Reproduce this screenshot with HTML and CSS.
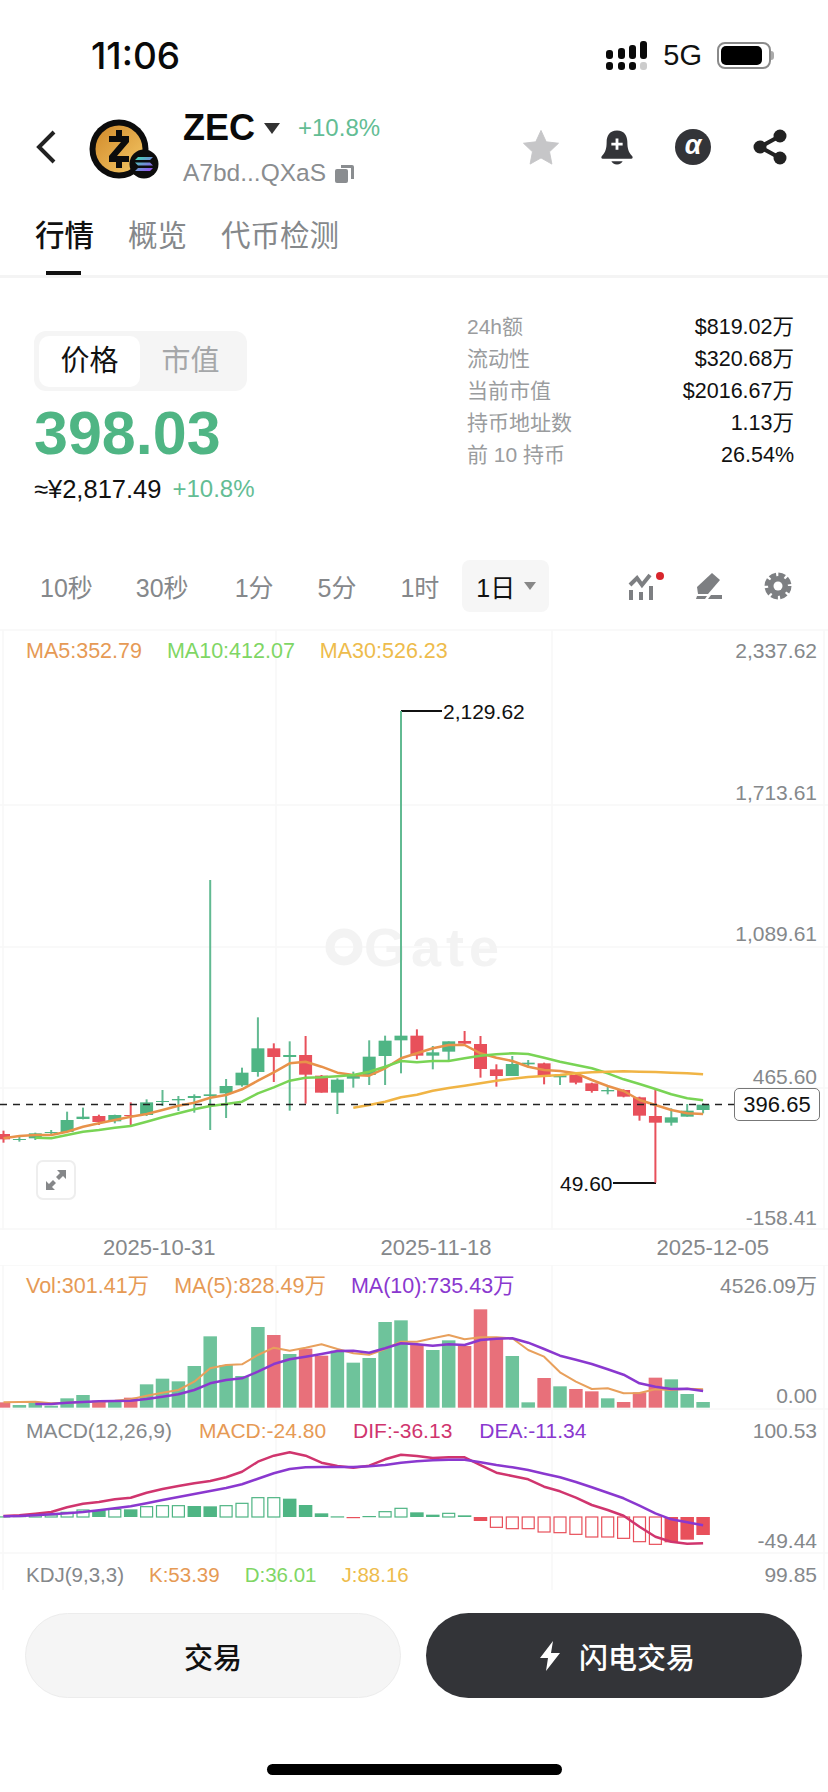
FILE: index.html
```html
<!doctype html>
<html>
<head>
<meta charset="UTF-8">
<title>ZEC</title>
<link rel="stylesheet" href="styles.css">
</head>

<body>
<div class="page">

  <div class="status">
    <span class="time">11:06</span>
    <div class="status-right">
      <svg class="signal" width="41" height="29" viewBox="0 0 41 29">
        <rect x="0" y="9" width="7" height="9" rx="3"/><rect x="0" y="21" width="7" height="8" rx="3"/>
        <rect x="12" y="7" width="7" height="11" rx="3"/><rect x="12" y="21" width="7" height="8" rx="3"/>
        <rect x="23" y="4" width="7" height="14" rx="3"/><rect x="23" y="21" width="7" height="8" rx="3"/>
        <rect x="34" y="0" width="7" height="18" rx="3"/><rect class="off" x="34" y="21" width="7" height="8" rx="3"/>
      </svg>
      <span class="net">5G</span>
      <div class="battery"><i></i></div>
    </div>
  </div>

  <div class="header">
    <svg class="back" width="20" height="34" viewBox="0 0 20 34"><path d="M18 2 3 17l15 15" fill="none" stroke="#222" stroke-width="4"/></svg>
    <svg class="logo" width="70" height="60" viewBox="0 0 70 60">
      <defs>
        <linearGradient id="gold" x1="0" y1="0" x2="1" y2="1"><stop offset="0" stop-color="#d18a2a"/><stop offset="1" stop-color="#f4c765"/></linearGradient>
        <linearGradient id="sol" x1="0" y1="0" x2="1" y2="1"><stop offset="0" stop-color="#3fe0b0"/><stop offset="1" stop-color="#9b45f5"/></linearGradient>
      </defs>
      <circle cx="30" cy="30" r="29.5" fill="#0c0c0c"/>
      <circle cx="30" cy="30" r="23.5" fill="url(#gold)"/>
      <path d="M30 11v7M30 42v7" stroke="#0c0c0c" stroke-width="6"/>
      <path d="M20 17h20v6L28 37h12v6H20v-6l12-14H20z" fill="#0c0c0c"/>
      <circle cx="55" cy="45" r="14.5" fill="#0c0c0c"/>
      <path d="M49 38h15l-3 3H46zM46 43.500h15l3 3H49zM49 49h15l-3 3H46z" fill="url(#sol)"/>
    </svg>
    <div class="coin">
      <div class="coin-top">
        <span class="coin-name">ZEC</span>
        <i class="caret"></i>
        <span class="coin-pct">+10.8%</span>
      </div>
      <div class="coin-addr">
        A7bd...QXaS
        <svg width="19" height="19" viewBox="0 0 19 19"><path d="M6 1h11q2 0 2 2v12h-3V4H6z" fill="#8a8d90"/><rect x="0" y="5" width="13" height="14" rx="2" fill="#8a8d90"/></svg>
      </div>
    </div>
    <div class="actions">
      <svg width="36" height="35" viewBox="0 0 38 36"><path d="M19 0 24.500 12 37.500 13.500 28 22.500 30.500 35.500 19 29 7.500 35.500 10 22.500 .5 13.500 13.500 12z" fill="#c6c6c8" stroke="#c6c6c8" stroke-linejoin="round"/></svg>
      <svg width="32" height="35" viewBox="0 0 34 36"><path d="M17 0c-8 0-11 6-11 12 0 7-1 11-5 15-1 1-1 3 1 3h30c2 0 2-2 1-3-4-4-5-8-5-15 0-6-3-12-11-12z" fill="#333438"/><path d="M11 32.500h12c-1 2-3 3.500-6 3.500s-5-1.500-6-3.500z" fill="#333438"/><path d="M17 8.500v12M11 14.500h12" stroke="#fff" stroke-width="3"/></svg>
      <div class="alpha">α</div>
      <svg width="34" height="36" viewBox="0 0 34 36"><path d="M27 7 7 18l20 11" fill="none" stroke="#222" stroke-width="4"/><circle cx="27" cy="7" r="6.500" fill="#222"/><circle cx="7" cy="18" r="6.500" fill="#222"/><circle cx="27" cy="29" r="6.500" fill="#222"/></svg>
    </div>
  </div>

  <div class="tabs">
    <a class="tab tab-on">行情</a>
    <a class="tab">概览</a>
    <a class="tab">代币检测</a>
  </div>

  <div class="summary">
    <div class="price-box">
      <div class="toggle">
        <span class="toggle-on">价格</span>
        <span>市值</span>
      </div>
      <div class="price">398.03</div>
      <div class="price-sub"><span>≈¥2,817.49</span><span class="pct">+10.8%</span></div>
    </div>
    <ul class="stats">
      <li><span>24h额</span><b>$819.02万</b></li>
      <li><span>流动性</span><b>$320.68万</b></li>
      <li><span>当前市值</span><b>$2016.67万</b></li>
      <li><span>持币地址数</span><b>1.13万</b></li>
      <li><span>前 10 持币</span><b>26.54%</b></li>
    </ul>
  </div>

  <div class="periods">
    <a class="p1">10秒</a>
    <a class="p2">30秒</a>
    <a class="p3">1分</a>
    <a class="p4">5分</a>
    <a class="p5">1时</a>
    <a class="period-on">1日<i></i></a>
    <div class="tools">
      <svg width="38" height="28" viewBox="0 0 38 28"><path d="M2 13 9 6l5 7 8-10" fill="none" stroke="#7d7f82" stroke-width="4"/><path d="M3 18v10M13 20v8M23 14v14" stroke="#7d7f82" stroke-width="4"/><circle cx="32" cy="4" r="4" fill="#d8262c"/></svg>
      <svg width="26" height="26" viewBox="0 0 26 26"><path d="M16 0l8 7-12 14H2l-1-7z" fill="#7d7f82"/><path d="M12 26h14v-4H15zM0 26h9l2-3H1z" fill="#7d7f82"/></svg>
      <svg width="28" height="28" viewBox="0 0 28 28"><circle cx="14" cy="14" r="10" fill="#7d7f82"/><circle cx="14" cy="14" r="11" fill="none" stroke="#7d7f82" stroke-width="5" stroke-dasharray="6.500 2.140"/><circle cx="14" cy="14" r="4.500" fill="#fff"/></svg>
    </div>
  </div>

  <div class="pane pane-main">
    <svg id="main" class="plot" viewBox="0 626 828 604">
      <g class="grid">
        <path d="M0 805H828M0 947H828M0 1088H828M0 1229H828M3 630V1230M276 630V1230M552 630V1230M824 630V1230M0 630H828"/>
      </g>
      <g class="mark">
        <circle cx="344" cy="947" r="14" fill="none" stroke="#f3f3f3" stroke-width="9"/>
        <text x="364" y="966">Gate</text>
      </g>
      <text class="tick" x="817" y="800">1,713.61</text>
      <text class="tick" x="817" y="941">1,089.61</text>
      <text class="tick" x="817" y="1084">465.60</text>
      <text class="tick" x="817" y="1225">-158.41</text>
      <path class="lead" d="M401 711H442M613 1183H656"/>
      <text class="note" x="443" y="719">2,129.62</text>
      <text class="note" x="560" y="1191">49.60</text>
    </svg>
    <div class="legend legend-main">
      <span class="c-ma5">MA5:352.79</span>
      <span class="c-ma10">MA10:412.07</span>
      <span class="c-ma30">MA30:526.23</span>
      <span class="axis-top">2,337.62</span>
    </div>
    <div class="last-price">396.65</div>
    <div class="expand">
      <svg width="20" height="20" viewBox="0 0 20 20"><path d="M11 0h9v9l-3-3-4 4-3-3 4-4zM9 20H0v-9l3 3 4-4 3 3-4 4z" fill="#858789"/></svg>
    </div>
  </div>

  <div class="dates">
    <span>2025-10-31</span>
    <span>2025-11-18</span>
    <span>2025-12-05</span>
  </div>

  <div class="pane pane-vol">
    <svg id="vol" class="plot" viewBox="0 1265 828 145">
      <g class="grid"><path d="M0 1265H828M0 1409H828M3 1265V1410M276 1265V1410M552 1265V1410M824 1265V1410"/></g>
      <text class="tick" x="817" y="1403">0.00</text>
    </svg>
    <div class="legend legend-vol">
      <span class="c-ma5">Vol:301.41万</span>
      <span class="c-ma5">MA(5):828.49万</span>
      <span class="c-purple">MA(10):735.43万</span>
      <span class="axis-top">4526.09万</span>
    </div>
  </div>

  <div class="pane pane-macd">
    <svg id="macd" class="plot" viewBox="0 1410 828 144">
      <g class="grid"><path d="M0 1553H828M3 1410V1554M276 1410V1554M552 1410V1554M824 1410V1554"/></g>
      <text class="tick" x="817" y="1548">-49.44</text>
    </svg>
    <div class="legend">
      <span class="c-gray">MACD(12,26,9)</span>
      <span class="c-ma5">MACD:-24.80</span>
      <span class="c-dif">DIF:-36.13</span>
      <span class="c-purple">DEA:-11.34</span>
      <span class="axis-top">100.53</span>
    </div>
  </div>

  <div class="pane pane-kdj">
    <svg class="plot" viewBox="0 1554 828 36">
      <g class="grid"><path d="M3 1554V1590M276 1554V1590M552 1554V1590M824 1554V1590"/></g>
    </svg>
    <div class="legend legend-kdj">
      <span class="c-gray">KDJ(9,3,3)</span>
      <span class="c-ma5">K:53.39</span>
      <span class="c-ma10">D:36.01</span>
      <span class="c-ma30">J:88.16</span>
      <span class="axis-top">99.85</span>
    </div>
  </div>

  <div class="footer">
    <a class="btn btn-light">交易</a>
    <a class="btn btn-dark">
      <svg width="20" height="30" viewBox="0 0 20 30"><path d="M13 0 0 17h8L6 30 20 12h-9z" fill="#fff"/></svg>
      闪电交易
    </a>
  </div>
  <div class="home"></div>

</div>
<script src="chart.js"></script>
</body>
</html>
```

FILE: styles.css
```css
* {
  box-sizing: border-box;
}
html, body {
  margin: 0;
  padding: 0;
  background-color: #fff;
}
body {
  font-family: "Liberation Sans", "Noto Sans CJK SC", sans-serif;
  color: #111;
}
ul {
  list-style: none;
  margin: 0;
  padding: 0;
}
.page {
  width: 828px;
  height: 1792px;
  overflow: hidden;
}

/* status bar */
.status {
  height: 110px;
  display: flex;
  align-items: center;
  justify-content: space-between;
  padding: 0 57px 0 91px;
}
.time {
  font-family: Inter, sans-serif;
  font-size: 37px;
  font-weight: 500;
  color: #0a0a0a;
}
.status-right {
  display: flex;
  align-items: center;
}
.signal {
  margin-right: 1px;
}
.signal rect {
  fill: #0a0a0a;
}
.signal .off {
  fill: #ccc;
}
.net {
  font-size: 29px;
  margin: 0 15px;
  color: #111;
}
.battery {
  width: 54px;
  height: 27px;
  border: 2px solid #8a8a8a;
  border-radius: 8px;
  padding: 2px;
  position: relative;
}
.battery i {
  display: block;
  width: 41px;
  height: 19px;
  background-color: #000;
  border-radius: 5px;
}
.battery:after {
  content: '';
  position: absolute;
  right: -5px;
  top: 7px;
  width: 3px;
  height: 9px;
  border-radius: 0 3px 3px 0;
  background-color: #aaa;
}

/* coin header */
.header {
  height: 74px;
  display: flex;
  align-items: center;
  padding: 0 41px 0 36px;
}
.back {
  flex: none;
}
.logo {
  flex: none;
  margin: 4px 24px 0 33px;
}
.coin {
  flex: none;
  margin-top: 4px;
}
.coin-top {
  display: flex;
  align-items: center;
  height: 36px;
}
.coin-name {
  font-size: 36px;
  font-weight: 700;
  color: #0a0a0a;
}
.caret {
  width: 0;
  height: 0;
  margin: 0 18px 0 9px;
  border: 8.5px solid transparent;
  border-bottom: none;
  border-top: 11px solid #333;
}
.coin-pct {
  font-size: 24px;
  color: #63bd94;
}
.coin-addr {
  display: flex;
  align-items: center;
  gap: 9px;
  font-size: 24.5px;
  line-height: 30px;
  margin-top: 12px;
  color: #8a8d90;
}
.actions {
  margin-left: auto;
  display: flex;
  align-items: center;
  gap: 42px;
}
.alpha {
  width: 36px;
  height: 36px;
  border-radius: 50%;
  background-color: #333438;
  color: #fff;
  font-size: 27px;
  font-style: italic;
  font-weight: 700;
  line-height: 33px;
  text-align: center;
}

/* tabs */
.tabs {
  height: 94px;
  display: flex;
  align-items: flex-start;
  gap: 34px;
  padding: 30px 0 0 35px;
  border-bottom: 3px solid #f4f4f4;
}
.tab {
  position: relative;
  height: 61px;
  font-size: 29.5px;
  line-height: 44px;
  color: #85888b;
}
.tab-on {
  color: #111;
  font-weight: 500;
}
.tab-on:after {
  content: '';
  position: absolute;
  left: 11px;
  bottom: 0;
  width: 35px;
  height: 4px;
  background-color: #111;
}

/* price summary */
.summary {
  height: 282px;
  display: flex;
  justify-content: space-between;
  padding: 33px 34px 0 34px;
}
.price-box {
  padding-top: 20px;
}
.toggle {
  width: 213px;
  height: 60px;
  display: flex;
  align-items: center;
  padding: 0 5px;
  background-color: #f5f5f5;
  border-radius: 12px;
}
.toggle span {
  width: 101px;
  height: 51px;
  font-size: 29px;
  line-height: 50px;
  text-align: center;
  color: #a5a7a9;
}
.toggle .toggle-on {
  background-color: #fff;
  border-radius: 10px;
  color: #111;
}
.price {
  font-size: 61px;
  font-weight: 700;
  line-height: 66px;
  margin-top: 9px;
  color: #4fb584;
}
.price-sub {
  display: flex;
  align-items: center;
  gap: 11px;
  margin-top: 9px;
  font-size: 25.5px;
  line-height: 28px;
}
.pct {
  font-size: 24px;
  color: #63bd94;
}
.stats {
  width: 327px;
}
.stats li {
  display: flex;
  justify-content: space-between;
  height: 32px;
  font-size: 21px;
  line-height: 32px;
  color: #9a9c9e;
}
.stats b {
  font-size: 21.5px;
  font-weight: 400;
  color: #111;
}

/* period row */
.periods {
  height: 52px;
  position: relative;
  display: flex;
  align-items: center;
  font-size: 25px;
  color: #85888b;
}
.p1 { margin-left: 40px; }
.p2 { margin-left: 43px; }
.p3 { margin-left: 46px; }
.p4 { margin-left: 44px; }
.p5 { margin-left: 44px; }
.period-on {
  margin-left: 23px;
  width: 87px;
  height: 52px;
  padding-left: 14px;
  display: flex;
  align-items: center;
  background-color: #f6f6f6;
  border-radius: 8px;
  color: #111;
}
.period-on i {
  width: 0;
  height: 0;
  margin-left: 9px;
  border: 6px solid transparent;
  border-bottom: none;
  border-top: 8px solid #888;
}
.tools {
  margin-left: auto;
  margin-right: 36px;
  display: flex;
  align-items: center;
  gap: 30px;
}
.tools svg:last-child {
  margin-left: 12px;
}

/* chart panes */
.pane {
  position: relative;
}
.pane-main {
  height: 604px;
  margin-top: 14px;
}
.pane-vol {
  height: 145px;
}
.pane-macd {
  height: 144px;
}
.pane-kdj {
  height: 36px;
}
.plot {
  display: block;
  width: 828px;
  height: 100%;
}
.grid path {
  fill: none;
  stroke: #f8f8f8;
  stroke-width: 1.500;
}
.mark text {
  font-size: 54px;
  font-weight: 700;
  letter-spacing: 5px;
  fill: #f3f3f3;
}
.tick {
  font-size: 21px;
  fill: #85888b;
  text-anchor: end;
}
.note {
  font-size: 21px;
  fill: #111;
}
.lead {
  fill: none;
  stroke: #111;
  stroke-width: 2;
}
.legend {
  position: absolute;
  left: 26px;
  right: 11px;
  top: 9px;
  display: flex;
  gap: 27px;
  font-size: 21px;
  line-height: 24px;
}
.legend-main {
  top: 13px;
  gap: 25px;
  font-size: 21.5px;
}
.legend-vol {
  gap: 25px;
  font-size: 21.5px;
}
.legend-kdj {
  font-size: 20.5px;
  gap: 25px;
}
.axis-top {
  margin-left: auto;
  font-size: 21px;
  color: #85888b;
}
.c-ma5 { color: #e69a55; }
.c-ma10 { color: #7fd665; }
.c-ma30 { color: #eebc4c; }
.c-purple { color: #8a38cf; }
.c-dif { color: #d0356e; }
.c-gray { color: #85888b; }
.last-price {
  position: absolute;
  left: 734px;
  top: 462px;
  width: 86px;
  height: 33px;
  border: 1px solid #777;
  border-radius: 5px;
  background-color: #fff;
  font-size: 22px;
  line-height: 31px;
  text-align: center;
  color: #111;
}
.expand {
  position: absolute;
  left: 36px;
  top: 534px;
  width: 40px;
  height: 40px;
  display: flex;
  align-items: center;
  justify-content: center;
  background-color: #fff;
  border: 2px solid #eee;
  border-radius: 7px;
}
.dates {
  height: 35px;
  display: flex;
  justify-content: space-between;
  align-items: center;
  padding: 0 59px 0 103px;
  font-size: 22px;
  color: #85888b;
}

/* bottom buttons */
.footer {
  display: flex;
  justify-content: space-between;
  padding: 23px 26px 0 25px;
}
.btn {
  width: 376px;
  height: 85px;
  display: flex;
  align-items: center;
  justify-content: center;
  gap: 19px;
  border-radius: 43px;
  font-size: 29px;
  font-weight: 500;
}
.btn-light {
  background-color: #f5f5f5;
  border: 1px solid #ececec;
  color: #111;
}
.btn-dark {
  padding-left: 7px;
  background-color: #333438;
  color: #fff;
}
.home {
  width: 295px;
  height: 11px;
  margin: 66px auto 0;
  background-color: #000;
  border-radius: 6px;
}
```

FILE: chart.js
```js
// y values are in thirds of a pixel above each pane's own offset, one per candle
var NS = 'http://www.w3.org/2000/svg';
var UP = '#4fb584', DOWN = '#e8505b';
var STEP = 15.9, FIRST = 3.5;

function cx(i) { return FIRST + STEP * i; }

function el(parent, name, attrs) {
  var n = document.createElementNS(NS, name);
  for (var k in attrs) n.setAttribute(k, attrs[k]);
  parent.appendChild(n);
  return n;
}

function line(svg, base, from, ys, color, w) {
  var pts = ys.map(function (v, i) {
    return cx(from + i).toFixed(1) + ',' + (base + v / 3).toFixed(1);
  });
  el(svg, 'polyline', { points: pts.join(' '), fill: 'none', stroke: color, 'stroke-width': w, 'stroke-linejoin': 'round' });
}

// up?, wick top, wick bottom, body top, body bottom
var candles = [
  [0,512,548,522,538],[1,530,545,537,540],[1,518,540,520,535],[1,510,527,516,519],[1,455,516,480,516],
  [1,443,478,470,477],[0,464,495,468,486],[1,464,490,465,484],[0,427,495,465,468],[1,418,468,427,465],
  [1,390,438,423,426],[1,408,453,417,421],[1,403,458,408,414],[1,-240,510,403,408],[1,357,474,378,400],
  [1,323,380,338,376],[1,172,350,265,336],[0,250,366,265,291],[1,244,452,285,291],[0,228,431,285,344],
  [0,345,398,347,398],[1,355,462,359,398],[1,335,383,348,356],[1,241,375,290,345],[1,227,375,242,288],
  [1,-747,340,227,241],[0,208,298,227,287],[1,258,328,277,287],[1,244,302,244,275],[0,213,253,243,251],
  [0,228,353,252,327],[0,313,380,328,348],[1,288,348,312,348],[1,300,322,308,313],[0,308,373,310,351],
  [1,345,375,346,352],[0,343,373,345,368],[0,368,398,370,393],[1,380,403,390,394],[0,388,412,390,410],
  [0,410,482,412,467],[0,390,668,468,488],[1,445,497,472,488],[1,432,470,452,470],[1,430,460,434,450]
];
var ma5 = [535,528,525,525,515,500,490,480,470,462,450,437,428,413,405,388,362,337,310,305,320,338,345,347,325,295,280,265,255,255,280,293,303,320,330,333,340,360,378,393,420,435,450,460,462];
var ma10 = [533,535,525,515,510,503,498,485,472,460,448,438,432,425,400,382,362,353,352,349,345,335,320,303,307,303,303,295,287,283,280,282,293,305,315,325,340,358,372,387,403,415,421];
var ma30 = [443,435,425,412,404,392,384,377,370,362,356,351,348,345,340,337,335,334,335,336,338,340,343];

var volUp = [0,1,1,1,1,1,0,1,0,1,1,1,1,1,1,1,1,0,1,0,0,1,1,1,1,1,0,1,1,0,0,0,1,1,0,1,0,0,1,0,0,0,1,1,1];
var vol = [457,465,458,467,445,435,452,452,443,403,386,394,348,259,345,378,231,255,312,296,317,302,338,324,216,211,285,300,271,288,178,265,318,457,384,409,417,424,445,456,427,383,388,432,456];
var volMa5 = [457,456,455,460,458,456,455,452,448,437,428,420,395,355,345,343,315,293,302,293,283,297,310,314,297,275,275,265,255,268,262,262,265,300,320,367,395,417,415,430,429,418,420,416,418];
var volMa10 = [462,462,458,456,454,453,452,447,440,433,420,400,390,385,365,342,328,320,312,303,302,308,295,280,283,287,283,285,270,266,265,278,297,317,329,342,358,374,400,410,417,416,423];

var hist = [799,798,796,795,787,780,780,778,778,770,767,767,768,769,767,760,743,743,746,765,790,799,802,798,785,775,787,794,790,796,813,832,836,836,846,848,853,861,861,865,875,883,877,869,855];
var solid = [6,8,12,13,18,19,20,22,26,27,29,30,42,43,44];
var dif = [798,796,791,786,772,761,756,748,743,728,717,708,700,693,682,665,635,617,607,617,638,648,653,647,628,614,618,624,622,622,645,668,678,688,710,724,743,765,780,797,830,860,875,881,880];
var dea = [799,798,796,793,790,786,781,775,769,760,750,741,732,723,714,703,686,670,657,652,651,651,651,649,645,638,634,631,629,629,637,645,652,660,671,682,696,712,728,745,767,790,808,817,826];

// candles
var main = document.getElementById('main');
candles.forEach(function (c, i) {
  var color = c[0] ? UP : DOWN, x = cx(i);
  el(main, 'rect', { x: x - 1, y: 960 + c[1] / 3, width: 2, height: (c[2] - c[1]) / 3, fill: c[0] ? '#62ba92' : DOWN });
  el(main, 'rect', { x: x - 6.5, y: 960 + c[3] / 3, width: 13, height: (c[4] - c[3]) / 3, fill: color });
});
line(main, 960, 0, ma5, '#e8924a', 2.5);
line(main, 960, 2, ma10, '#79d455', 2.5);
line(main, 960, 22, ma30, '#f0b445', 2.5);
el(main, 'path', { d: 'M0 1104.500H734', stroke: '#222', 'stroke-width': 1.5, 'stroke-dasharray': '7 6' });

// volume
var volSvg = document.getElementById('vol');
vol.forEach(function (v, i) {
  el(volSvg, 'rect', { x: cx(i) - 6.75, y: 1250 + v / 3, width: 13.5, height: (473 - v) / 3, fill: volUp[i] ? '#6ec39b' : '#e8707a' });
});
line(volSvg, 1250, 0, volMa5, '#e8a05c', 2);
line(volSvg, 1250, 2, volMa10, '#8a38cf', 2.5);

// macd
var macd = document.getElementById('macd');
hist.forEach(function (v, i) {
  var color = i < 30 && i != 22 ? UP : DOWN;
  var top = Math.min(v, 801), h = Math.abs(801 - v);
  if (solid.indexOf(i) > -1 || h < 5) {
    el(macd, 'rect', { x: cx(i) - 6.75, y: 1250 + top / 3, width: 13.5, height: Math.max(h / 3, 1.2), fill: color });
  } else {
    el(macd, 'rect', { x: cx(i) - 6, y: 1250 + top / 3, width: 12, height: h / 3, fill: '#fff', stroke: color, 'stroke-width': 1.2 });
  }
});
line(macd, 1250, 0, dif, '#d0356e', 2.5);
line(macd, 1250, 0, dea, '#8a38cf', 2.5);
```
